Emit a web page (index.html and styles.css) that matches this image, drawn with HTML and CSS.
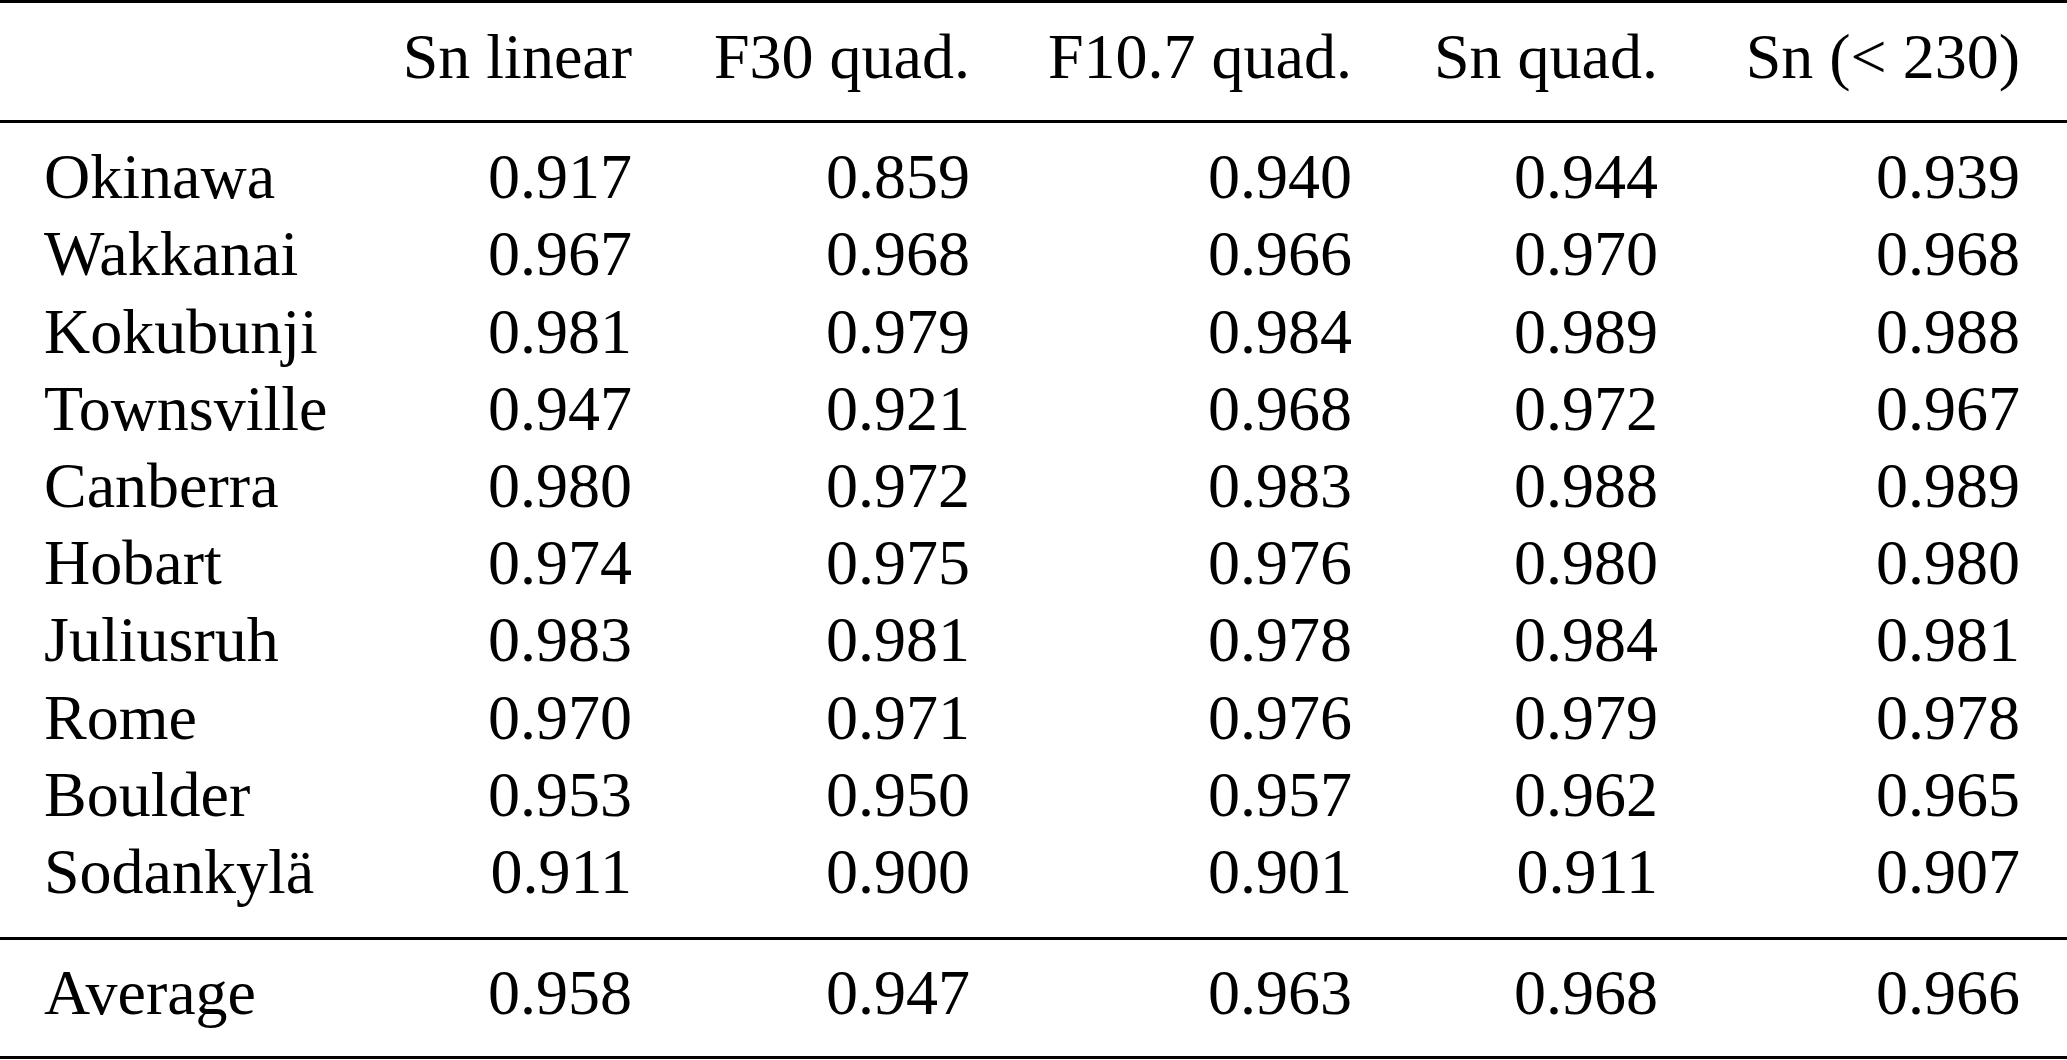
FILE: index.html
```html
<!DOCTYPE html>
<html lang="en">
<head>
<meta charset="utf-8">
<title>Correlation table</title>
<link rel="stylesheet" href="styles.css">
</head>
<body>
<div class="table">
  <div class="head">
    <div class="row">
      <div class="cell name"></div>
      <div class="cell num">Sn linear</div>
      <div class="cell num">F30 quad.</div>
      <div class="cell num">F10.7 quad.</div>
      <div class="cell num">Sn quad.</div>
      <div class="cell num">Sn (&lt; 230)</div>
    </div>
  </div>
  <div class="body">
    <div class="row"><div class="cell name">Okinawa</div><div class="cell num">0.917</div><div class="cell num">0.859</div><div class="cell num">0.940</div><div class="cell num">0.944</div><div class="cell num">0.939</div></div>
    <div class="row"><div class="cell name">Wakkanai</div><div class="cell num">0.967</div><div class="cell num">0.968</div><div class="cell num">0.966</div><div class="cell num">0.970</div><div class="cell num">0.968</div></div>
    <div class="row"><div class="cell name">Kokubunji</div><div class="cell num">0.981</div><div class="cell num">0.979</div><div class="cell num">0.984</div><div class="cell num">0.989</div><div class="cell num">0.988</div></div>
    <div class="row"><div class="cell name">Townsville</div><div class="cell num">0.947</div><div class="cell num">0.921</div><div class="cell num">0.968</div><div class="cell num">0.972</div><div class="cell num">0.967</div></div>
    <div class="row"><div class="cell name">Canberra</div><div class="cell num">0.980</div><div class="cell num">0.972</div><div class="cell num">0.983</div><div class="cell num">0.988</div><div class="cell num">0.989</div></div>
    <div class="row"><div class="cell name">Hobart</div><div class="cell num">0.974</div><div class="cell num">0.975</div><div class="cell num">0.976</div><div class="cell num">0.980</div><div class="cell num">0.980</div></div>
    <div class="row"><div class="cell name">Juliusruh</div><div class="cell num">0.983</div><div class="cell num">0.981</div><div class="cell num">0.978</div><div class="cell num">0.984</div><div class="cell num">0.981</div></div>
    <div class="row"><div class="cell name">Rome</div><div class="cell num">0.970</div><div class="cell num">0.971</div><div class="cell num">0.976</div><div class="cell num">0.979</div><div class="cell num">0.978</div></div>
    <div class="row"><div class="cell name">Boulder</div><div class="cell num">0.953</div><div class="cell num">0.950</div><div class="cell num">0.957</div><div class="cell num">0.962</div><div class="cell num">0.965</div></div>
    <div class="row"><div class="cell name">Sodankylä</div><div class="cell num">0.911</div><div class="cell num">0.900</div><div class="cell num">0.901</div><div class="cell num">0.911</div><div class="cell num">0.907</div></div>
  </div>
  <div class="foot">
    <div class="row"><div class="cell name">Average</div><div class="cell num">0.958</div><div class="cell num">0.947</div><div class="cell num">0.963</div><div class="cell num">0.968</div><div class="cell num">0.966</div></div>
  </div>
</div>
</body>
</html>
```
FILE: styles.css
```css
html, body {
  margin: 0;
  padding: 0;
  background: #ffffff;
}

body {
  font-family: "Liberation Serif", "Times New Roman", serif;
  font-size: 64px;
  line-height: 77px;
  color: #000000;
}

.table {
  width: 2067px;
  border-top: 3px solid #000;
  border-bottom: 3px solid #000;
}

.head {
  padding: 15px 0 25px;
  border-bottom: 3px solid #000;
}

.body {
  padding: 15px 0 27px;
  border-bottom: 3px solid #000;
}

.foot {
  padding: 14px 0 25px;
}

.row {
  display: grid;
  grid-template-columns: 400px 232px 338px 382px 306px 1fr;
  padding-right: 47px;
  height: 77.2px;
}

.cell {
  white-space: nowrap;
}

.name {
  padding-left: 44px;
  text-align: left;
}

.num {
  text-align: right;
}
```
